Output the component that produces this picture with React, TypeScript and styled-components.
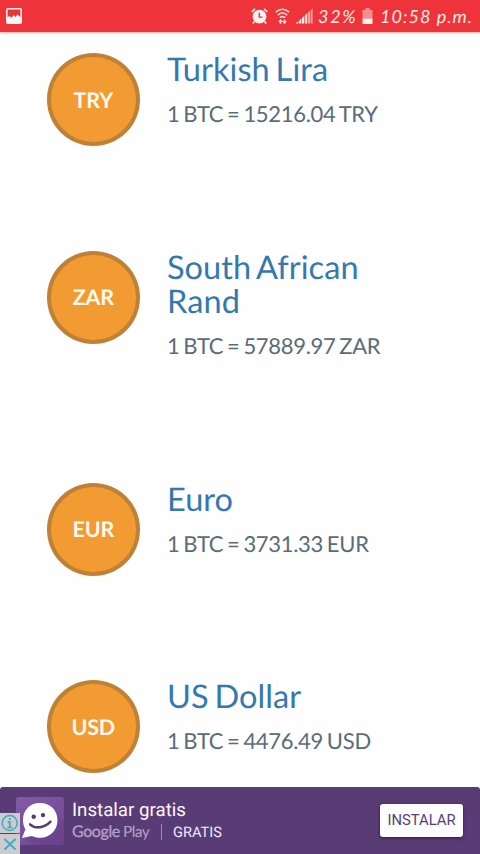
import React from "react";
import styled, { createGlobalStyle } from "styled-components";

const GlobalStyle = createGlobalStyle`
  * { box-sizing: border-box; }
  body { margin: 0; background: #fefefe; font-family: Lato, sans-serif; text-rendering: geometricPrecision; }
`;

const Screen = styled.div`
  width: 480px;
  height: 854px;
  display: flex;
  flex-direction: column;
  overflow: hidden;
  background: #fefefe;
`;

const StatusBar = styled.header`
  height: 32px;
  flex: none;
  display: flex;
  align-items: center;
  justify-content: space-between;
  padding: 0 8px 0 6px;
  background: #ee333a;
  box-shadow: 0 1px 2px rgba(150, 60, 50, 0.45);
  color: #ffe9e6;
  svg { display: block; flex: none; }
`;

const StatusGroup = styled.div`
  display: flex;
  align-items: center;
`;

const StatusIcons = styled.div`
  display: flex;
  align-items: center;
  gap: 6.5px;
  margin-right: 5px;
`;

const StatusText = styled.span<{ $width: number; $spacing: number }>`
  width: ${(p) => p.$width}px;
  flex: none;
  font: italic 400 18px/32px Lato, sans-serif;
  letter-spacing: ${(p) => p.$spacing}px;
  white-space: nowrap;
`;

const Clock = styled(StatusText)`
  margin-left: 7px;
`;

const List = styled.main`
  flex: 1;
  min-height: 0;
  overflow: hidden;
  padding: 21px 47px 0 46.5px;
`;

const Row = styled.section`
  display: flex;
  align-items: flex-start;
  gap: 27px;
  margin-bottom: 104.5px;

  &:last-child { margin-bottom: 0; }
`;

const Coin = styled.div`
  width: 93.5px;
  height: 93px;
  flex: none;
  display: flex;
  align-items: center;
  justify-content: center;
  border: 4px solid #bf8136;
  border-radius: 50%;
  background: #f39b33;
  color: #fff9ee;
  font-size: 21.5px;
  font-weight: 700;
  letter-spacing: -0.2px;
`;

const Details = styled.div`
  width: 230px;
  min-height: 93px;
  padding-bottom: 19.2px;
`;

const Name = styled.h2`
  margin: -1px 0 0;
  color: #3478b0;
  font-size: 32.5px;
  line-height: 34.8px;
  font-weight: 400;
  letter-spacing: 0.08px;
  word-spacing: -2.6px;
`;

const Rate = styled.p`
  margin: 14px 0 0;
  height: 26px;
  color: #5b6b77;
  font-size: 22px;
  line-height: 26px;
  letter-spacing: -0.3px;
  word-spacing: -1.5px;
  white-space: nowrap;
`;

const AdBanner = styled.footer`
  position: relative;
  height: 67px;
  flex: none;
  display: flex;
  align-items: flex-start;
  padding: 0 17px 0 16px;
  background: #593b76;
  border-radius: 3px 3px 0 0;
  font-family: Roboto, sans-serif;
`;

const AppIcon = styled.div`
  width: 48px;
  height: 48px;
  margin: 10px 8px 0 0;
  border-radius: 3px;
  overflow: hidden;
  background: linear-gradient(145deg, #825ba5, #6d4491);
  svg { display: block; }
`;

const AdCopy = styled.div`
  flex: 1;
  padding-top: 12px;
`;

const AdTitle = styled.div`
  color: #fcf7ff;
  font-size: 18.7px;
  line-height: 22px;
`;

const AdMeta = styled.div`
  display: flex;
  align-items: center;
  height: 22px;
  color: #b4a2c5;
  font: 400 14.6px/20px Roboto, sans-serif;
`;

const GoogleWord = styled.span`
  width: 51px;
  font-family: Lato, sans-serif;
  font-size: 16px;
  font-weight: 400;
  -webkit-text-stroke: 0.3px #b4a2c5;
  letter-spacing: -0.4px;
`;

const PlayWord = styled.span`
  width: 38px;
  font-family: Lato, sans-serif;
  font-size: 15.5px;
  letter-spacing: -0.6px;
`;

const Divider = styled.span`
  width: 1px;
  height: 16px;
  margin-right: 11px;
  background: #a58fb8;
`;

const Price = styled.span`
  color: #f3eaf8;
`;

const InstallButton = styled.button`
  width: 83px;
  height: 33px;
  margin-top: 17px;
  padding: 0;
  border: 0;
  border-radius: 3px;
  background: #fdfcfe;
  box-shadow: 0 1px 3px rgba(25, 5, 45, 0.65);
  color: #593f70;
  font: 400 14.8px/31px Roboto, sans-serif;
`;

const AdControls = styled.div`
  position: absolute;
  left: 0;
  bottom: 0;
  width: 20px;
  display: grid;
  gap: 1px;
  svg { display: block; background: #cdcbcf; }
`;

const PictureIcon = () => (
  <svg width="16" height="16" viewBox="0 0 16 16">
    <rect x="0.8" y="0.8" width="14.4" height="14.4" rx="1" fill="none" stroke="#fff0ed" strokeWidth="1.6" />
    <path d="M1 9.5L3.5 8l2 1.7 2-2.7 2 2 2-2.5L15 9.5V15H1z" fill="#fff6f4" />
  </svg>
);

const AlarmIcon = () => (
  <svg width="17" height="17" viewBox="0 0 17 17">
    <path d="M.8 3.8L4 .9M16.2 3.8L13 .9M3.5 13.5l-1.7 2M13.5 13.5l1.7 2" stroke="#ffe9e6" strokeWidth="1.8" />
    <circle cx="8.5" cy="8.6" r="6.9" fill="#fff0ed" />
    <path d="M8.3 4.8v4.3h3.2" fill="none" stroke="#df3940" strokeWidth="1.4" />
  </svg>
);

const WifiIcon = () => (
  <svg width="15" height="17" viewBox="0 0 15 17" fill="none" stroke="#ffd7d3" strokeWidth="1.6">
    <path d="M.8 4.2Q7.5-1.7 14.2 4.2M2.8 7.1Q7.5 2.9 12.2 7.1M4.9 9.7Q7.5 7.5 10.1 9.7" />
    <path d="M5.5 16v-2.3M9.5 11.5v2.3" />
    <path d="M3.2 14l2.3-2.9L7.8 14zM7.2 13.3l2.3 2.9 2.3-2.9z" fill="#fff0ed" stroke="none" />
  </svg>
);

const SignalIcon = () => (
  <svg width="17" height="16" viewBox="0 0 17 16">
    <path d="M0 15.5h2.3v-2.3L0 15zM3 15.5h2.3v-5L3 12.7zM6 15.5h2.3V7.7L6 10z" fill="#fff0ed" />
    <path d="M9 15.5h2.3V5.1L9 7.2z" fill="#ffdbd7" />
    <path d="M12 15.5h2V2.8L12 4.6zM14.6 15.5h2V.3l-2 1.9z" fill="#f5a3a1" />
  </svg>
);

const BatteryIcon = () => (
  <svg width="11" height="17" viewBox="0 0 11 17">
    <path d="M3.3 0h4.4v2H10.5v9H.5V2h2.8z" fill="#f58f8e" />
    <path d="M.5 10.7h10V16H.5z" fill="#fff0ed" />
  </svg>
);

const ChatFace = () => (
  <svg width="48" height="48" viewBox="0 0 48 48">
    <path d="M36 13l12 12v23H18L8 39z" fill="#5c397d" opacity=".25" />
    <path d="M24 6C13.5 6 7 13.4 7 23c0 4 .8 6.4 2.4 9.2L6 41l10-2.1c2.3 1.2 5 1.8 8 1.8 10 0 17.5-7.5 17.5-17.5S34 6 24 6z" fill="#fff" />
    <circle cx="17.7" cy="19.8" r="2.2" fill="#573c70" />
    <circle cx="27" cy="18.1" r="2.2" fill="#573c70" />
    <path d="M14 27.3c5 4.8 14.5 3.8 20.5-2.7" fill="none" stroke="#573c70" strokeWidth="2.4" strokeLinecap="round" />
  </svg>
);

const InfoIcon = () => (
  <svg width="20" height="20" viewBox="0 0 20 20" fill="none" stroke="#35aebd">
    <circle cx="9.7" cy="10" r="7.5" strokeWidth="1.4" />
    <path d="M9.8 5v2M7.8 8.9h2v5.5M7.5 14.5h4.8" strokeWidth="1.7" />
  </svg>
);

const CloseIcon = () => (
  <svg width="20" height="20" viewBox="0 0 20 20" fill="none" stroke="#35aebd" strokeWidth="1.8">
    <path d="M4.5 5l11 10.5M15.5 5l-11 10.5" />
  </svg>
);

const currencies = [
  { code: "TRY", name: "Turkish Lira", rate: "15216.04" },
  { code: "ZAR", name: "South African Rand", rate: "57889.97" },
  { code: "EUR", name: "Euro", rate: "3731.33" },
  { code: "USD", name: "US Dollar", rate: "4476.49" },
];

export default function App() {
  return (
    <Screen>
      <GlobalStyle />
      <StatusBar>
        <PictureIcon />
        <StatusGroup>
          <StatusIcons>
            <AlarmIcon />
            <WifiIcon />
            <SignalIcon />
          </StatusIcons>
          <StatusText $width={44} $spacing={1.7}>32%</StatusText>
          <BatteryIcon />
          <Clock as="time" $width={92} $spacing={1.05}>10:58 p.m.</Clock>
        </StatusGroup>
      </StatusBar>
      <List>
        {currencies.map((c) => (
          <Row key={c.code}>
            <Coin>{c.code}</Coin>
            <Details>
              <Name>{c.name}</Name>
              <Rate>{`1 BTC = ${c.rate} ${c.code}`}</Rate>
            </Details>
          </Row>
        ))}
      </List>
      <AdBanner>
        <AppIcon><ChatFace /></AppIcon>
        <AdCopy>
          <AdTitle>Instalar gratis</AdTitle>
          <AdMeta>
            <GoogleWord>Google</GoogleWord>
            <PlayWord>Play</PlayWord>
            <Divider />
            <Price>GRATIS</Price>
          </AdMeta>
        </AdCopy>
        <InstallButton>INSTALAR</InstallButton>
        <AdControls>
          <InfoIcon />
          <CloseIcon />
        </AdControls>
      </AdBanner>
    </Screen>
  );
}
